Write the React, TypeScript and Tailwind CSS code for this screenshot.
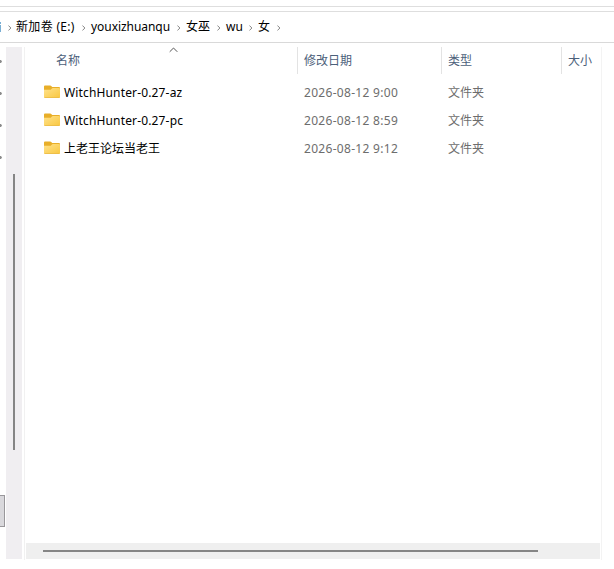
import React from 'react';

const crumbs = [
  { text: '新加卷 (E:)', box: 'w-[66px]', tracking: 'tracking-[0.32px]' },
  { text: 'youxizhuanqu', box: 'w-[86px]', tracking: 'tracking-[-0.05px]' },
  { text: '女巫', box: 'w-[31px]', tracking: 'tracking-[0px]' },
  { text: 'wu', box: 'w-[23px]', tracking: 'tracking-[0px]' },
  { text: '女', box: 'w-[19px]', tracking: 'tracking-[0px]' },
];

const files = [
  { name: 'WitchHunter-0.27-az', date: '2026-08-12 9:00', tracking: 'tracking-[0.15px]' },
  { name: 'WitchHunter-0.27-pc', date: '2026-08-12 8:59', tracking: 'tracking-[0.15px]' },
  { name: '上老王论坛当老王', date: '2026-08-12 9:12', tracking: 'tracking-[0px]' },
];

function Chevron() {
  return (
    <svg className="w-[4px] h-[6px] mt-px shrink-0" viewBox="0 0 4 6" fill="none" stroke="#777" strokeWidth="0.9">
      <path d="M0.4 0.5 2.9 3 0.4 5.5" />
    </svg>
  );
}

function Folder() {
  return (
    <svg className="w-4 h-[14px] shrink-0 -mt-[2px]" viewBox="0 0 16 14">
      <defs>
        <linearGradient id="folder" x1="0" y1="0" x2="1" y2="1">
          <stop offset="0" stopColor="#ffe28c" />
          <stop offset="1" stopColor="#f9c73f" />
        </linearGradient>
      </defs>
      <path d="M0 1.5Q0 .5 1 .5h5.2q.6 0 1 .5l1 1H15q1 0 1 1V7H0z" fill="#e8ae28" />
      <path d="M0 4.8h6.3q.5 0 .9-.5l.7-.9q.3-.4.8-.4H15q1 0 1 1v8q0 1-1 1H1q-1 0-1-1z" fill="url(#folder)" />
      <path d="M.2 12.3q.2.7.8.7h14q.6 0 .8-.7z" fill="#eabb47" />
    </svg>
  );
}

function Sidebar() {
  return (
    <div className="flex w-[25px] h-[513px] border-r border-[#f1f1f1]">
      <div className="w-[6px] shrink-0 overflow-hidden">
        <div className="flex flex-col gap-[29px] pt-[13px]">
          {[0, 1, 2, 3].map((i) => (
            <svg key={i} className="w-[2px] h-[3px]" viewBox="0 0 2 3">
              <path d="M0 0H1L2 1.5 1 3H0z" fill="#8b8b8b" />
            </svg>
          ))}
        </div>
        <div className="mt-[336px] w-[5px] h-8 border border-l-0 border-[#99979b] bg-[#d9d8dc]" />
      </div>
      <div className="w-4 h-[512px] bg-[#f0eef1] pt-[127px] pl-[7px]">
        <div className="w-[2px] h-[276px] bg-[#858585]" />
      </div>
    </div>
  );
}

export default function App() {
  return (
    <div className="w-[614px] h-[569px] overflow-hidden bg-white text-[12px] text-black whitespace-nowrap pt-[6px] font-['Noto_Sans','Noto_Sans_CJK_SC',sans-serif]">
      <div className="h-[6px] border-y border-[#dedede]" />
      <div className="flex items-center h-[31px] border-b border-[#d9d9d9]">
        <div className="w-2 shrink-0">
          <div className="flex flex-col gap-px w-px">
            <div className="h-[2px] bg-[#79aed3]" />
            <div className="h-[7px] bg-[#79aed3]" />
          </div>
        </div>
        <Chevron />
        <div className="w-1 shrink-0" />
        {crumbs.map((c) => (
          <div key={c.text} className="flex items-center">
            <span className={`${c.box} ${c.tracking} leading-4`}>{c.text}</span>
            <Chevron />
            <span className="w-[5px]" />
          </div>
        ))}
      </div>

      <div className="flex pt-[4px]">
        <Sidebar />
        <main className="flex flex-col w-[577px] h-[513px] border-r border-[#f3f3f3] pl-px">
          <div className="flex h-[27px] leading-[27px] text-[#4c607a]">
            <div className="flex w-[272px] border-r border-[#e3e3e3] pl-[30px]">
              <span className="w-[113px]">名称</span>
              <svg className="w-[9px] h-[6px]" viewBox="0 0 9 6" fill="none" stroke="#555" strokeWidth="1">
                <path d="M.7 4.8 4.5 1 8.3 4.8" />
              </svg>
            </div>
            <div className="w-[144px] border-r border-[#e3e3e3] pl-[6px]">修改日期</div>
            <div className="w-[120px] border-r border-[#e3e3e3] pl-[6px]">类型</div>
            <div className="pl-[6px]">大小</div>
          </div>
          <div className="flex-1 pt-[5px]">
            {files.map((f) => (
              <div key={f.name} className="flex h-7 items-center">
                <div className="flex items-center w-[278px] pl-[18px] gap-1">
                  <Folder />
                  <span className={f.tracking}>{f.name}</span>
                </div>
                <span className="w-[144px] text-[#6d6d6d] tracking-[0.3px]">{f.date}</span>
                <span className="text-[#6d6d6d]">文件夹</span>
              </div>
            ))}
          </div>
          <div className="w-[574px] h-4 mb-px bg-[#efefef] pt-[7px] pl-[17px]">
            <div className="w-[495px] h-[2px] bg-[#858585]" />
          </div>
        </main>
      </div>
    </div>
  );
}
